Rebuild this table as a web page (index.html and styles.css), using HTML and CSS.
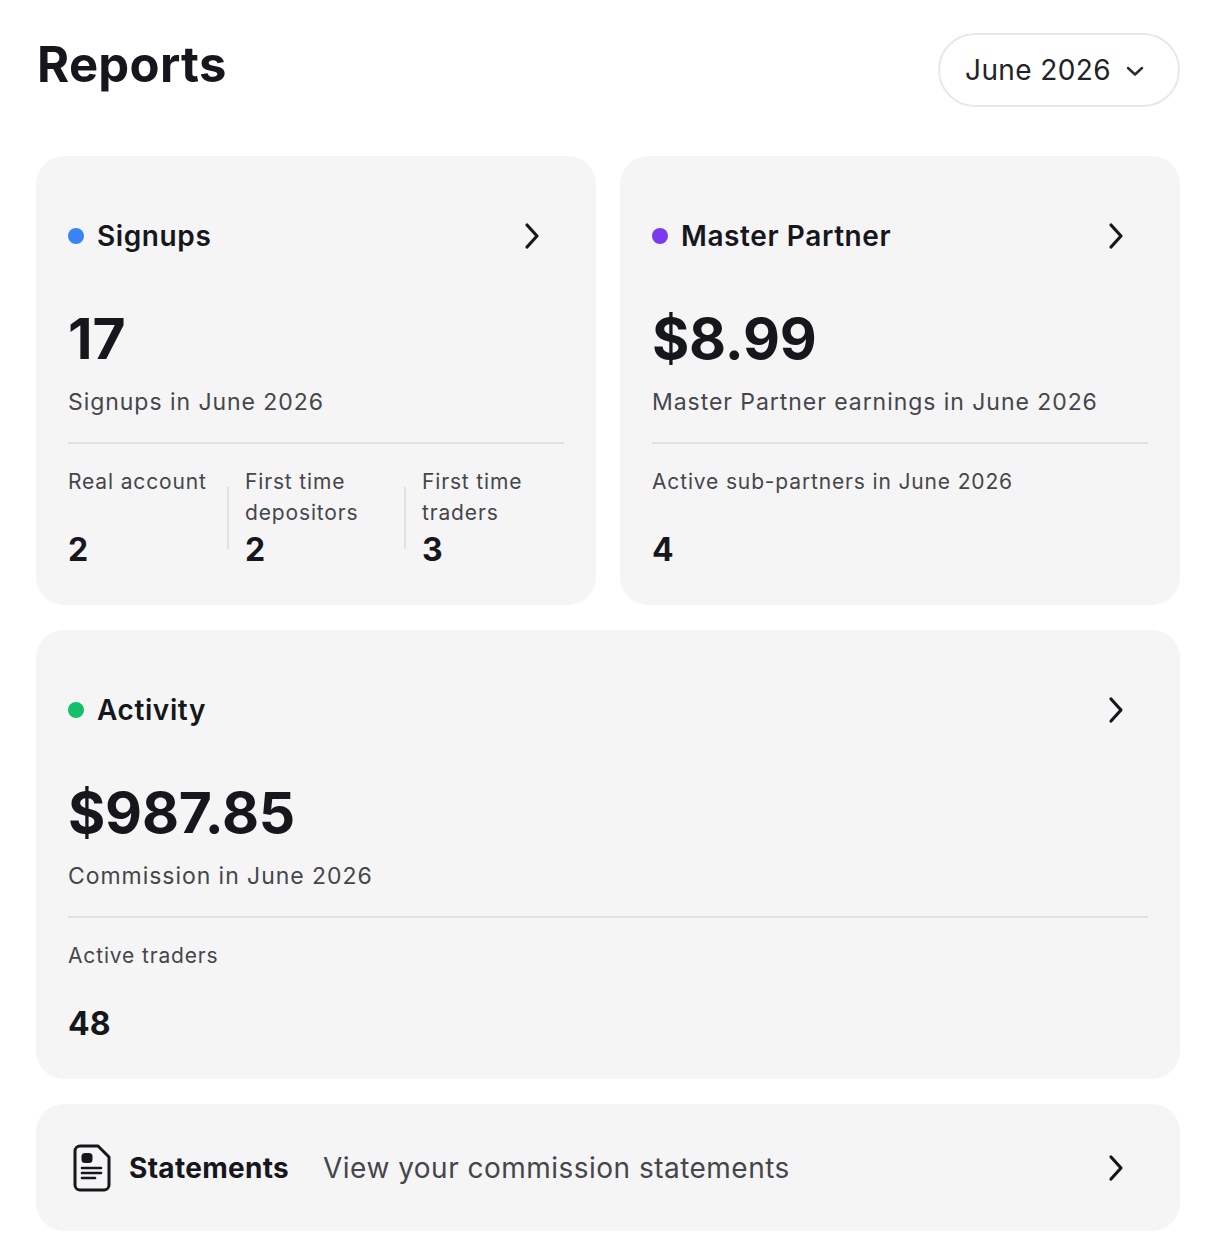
FILE: index.html
```html
<!DOCTYPE html>
<html lang="en">
<head>
<meta charset="utf-8">
<title>Reports</title>
<link rel="stylesheet" href="styles.css">
</head>
<body>
<main class="page">
  <header class="page-header">
    <h1 class="title">Reports</h1>
    <button class="month-select" type="button">
      <span class="month-text">June 2026</span>
      <svg class="chev-down" width="18" height="12" viewBox="0 0 18 12"><polyline points="2,3 9,9.5 16,3" fill="none" stroke="#2a2b30" stroke-width="2.4" stroke-linecap="round" stroke-linejoin="round"/></svg>
    </button>
  </header>

  <section class="grid">
    <article class="card">
      <div class="card-head">
        <span class="dot dot-blue"></span>
        <h2 class="card-title">Signups</h2>
        <svg class="chev" width="18" height="28" viewBox="0 0 18 28"><polyline points="4,3 14,14 4,25" fill="none" stroke="#16171d" stroke-width="3.2" stroke-linecap="round" stroke-linejoin="round"/></svg>
      </div>
      <div class="big">17</div>
      <div class="sub">Signups in June 2026</div>
      <hr class="divider">
      <div class="stats three">
        <div class="stat"><div class="label">Real account</div><div class="num">2</div></div>
        <span class="vline"></span>
        <div class="stat"><div class="label">First time depositors</div><div class="num">2</div></div>
        <span class="vline"></span>
        <div class="stat"><div class="label">First time traders</div><div class="num">3</div></div>
      </div>
    </article>

    <article class="card">
      <div class="card-head">
        <span class="dot dot-purple"></span>
        <h2 class="card-title">Master Partner</h2>
        <svg class="chev" width="18" height="28" viewBox="0 0 18 28"><polyline points="4,3 14,14 4,25" fill="none" stroke="#16171d" stroke-width="3.2" stroke-linecap="round" stroke-linejoin="round"/></svg>
      </div>
      <div class="big">$8.99</div>
      <div class="sub">Master Partner earnings in June 2026</div>
      <hr class="divider">
      <div class="stats">
        <div class="stat"><div class="label">Active sub-partners in June 2026</div><div class="num">4</div></div>
      </div>
    </article>

    <article class="card wide">
      <div class="card-head">
        <span class="dot dot-green"></span>
        <h2 class="card-title">Activity</h2>
        <svg class="chev" width="18" height="28" viewBox="0 0 18 28"><polyline points="4,3 14,14 4,25" fill="none" stroke="#16171d" stroke-width="3.2" stroke-linecap="round" stroke-linejoin="round"/></svg>
      </div>
      <div class="big">$987.85</div>
      <div class="sub">Commission in June 2026</div>
      <hr class="divider">
      <div class="stats">
        <div class="stat"><div class="label">Active traders</div><div class="num">48</div></div>
      </div>
    </article>

    <a class="card statements wide" href="#">
      <svg class="doc" width="38" height="48" viewBox="0 0 38 48">
        <path d="M7 2 H25 L36 13 V41 A5 5 0 0 1 31 46 H7 A5 5 0 0 1 2 41 V7 A5 5 0 0 1 7 2 Z" fill="none" stroke="#16171d" stroke-width="3" stroke-linejoin="round"/>
        <rect x="8.5" y="9" width="11" height="10" rx="3.5" fill="#16171d"/>
        <line x1="9" y1="24" x2="28" y2="24" stroke="#16171d" stroke-width="2.6" stroke-linecap="round"/>
        <line x1="9" y1="29" x2="28" y2="29" stroke="#16171d" stroke-width="2.6" stroke-linecap="round"/>
        <line x1="9" y1="34" x2="22" y2="34" stroke="#16171d" stroke-width="2.6" stroke-linecap="round"/>
      </svg>
      <span class="st-title">Statements</span>
      <span class="st-desc">View your commission statements</span>
      <svg class="chev" width="18" height="28" viewBox="0 0 18 28"><polyline points="4,3 14,14 4,25" fill="none" stroke="#16171d" stroke-width="3.2" stroke-linecap="round" stroke-linejoin="round"/></svg>
    </a>
  </section>
</main>
</body>
</html>
```

FILE: styles.css
```css
* { box-sizing: border-box; }

html, body {
  margin: 0;
  background: #ffffff;
  font-family: Inter, "Noto Sans", Arial, sans-serif;
  color: #16171d;
}

.page {
  padding: 33px 36px 24px 36px;
}

.page-header {
  display: flex;
  align-items: center;
  justify-content: space-between;
  height: 74px;
}

.title {
  margin: 0;
  font-size: 49px;
  font-weight: 700;
  letter-spacing: 0.3px;
  line-height: 1;
  margin-top: -12px;
  margin-left: 1px;
}

.month-select {
  display: flex;
  align-items: center;
  justify-content: space-between;
  height: 74px;
  width: 242px;
  padding: 0 34px 0 25px;
  border: 2px solid #e8e8e8;
  border-radius: 37px;
  background: #fff;
  font-family: inherit;
  font-size: 28px;
  color: #222328;
  letter-spacing: 0.4px;
  white-space: nowrap;
  cursor: pointer;
}

.chev-down { flex: none; margin-top: 2px; }

.grid {
  margin-top: 49px;
  display: grid;
  grid-template-columns: 1fr 1fr;
  gap: 25px 24px;
}

.card {
  background: #f5f5f5;
  border-radius: 28px;
  padding: 60px 32px 35px 32px;
  display: flex;
  flex-direction: column;
  min-height: 449px;
}

.wide { grid-column: 1 / -1; }

.card-head {
  display: flex;
  align-items: center;
  height: 40px;
}

.dot {
  width: 16px;
  height: 16px;
  border-radius: 50%;
  flex: none;
  margin-right: 13px;
}
.dot-blue { background: #3b82f6; }
.dot-purple { background: #7c3aed; }
.dot-green { background: #12c06a; }

.card-title {
  margin: 0;
  font-size: 28px;
  font-weight: 600;
  letter-spacing: 0.6px;
  flex: 1;
}

.chev { flex: none; margin-right: 23px; }

.big {
  margin-top: 47px;
  font-size: 57px;
  font-weight: 700;
  line-height: 72px;
  letter-spacing: -0.2px;
}

.sub {
  margin-top: 11px;
  font-size: 23px;
  line-height: 32px;
  color: #45464b;
  letter-spacing: 0.95px;
}

.divider {
  margin: 24px 0 0 0;
  border: none;
  border-top: 2px solid #e1e1e3;
  height: 0;
}

.stats {
  margin-top: 22px;
  display: grid;
  grid-template-columns: 1fr;
}

.stats.three {
  grid-template-columns: 142px 1px 142px 1px 142px;
  column-gap: 17px;
}

.vline {
  width: 2px;
  height: 62px;
  background: #e1e1e3;
  align-self: center;
}

.stat {
  display: flex;
  flex-direction: column;
  justify-content: space-between;
}

.label {
  font-size: 21px;
  line-height: 31px;
  min-height: 62px;
  color: #45464b;
  letter-spacing: 0.85px;
}

.stats.three .label { min-height: 0; }

.num {
  margin-top: 2px;
  font-size: 32px;
  line-height: 40px;
  font-weight: 700;
}

.statements {
  min-height: 127px;
  padding: 0 32px 0 37px;
  flex-direction: row;
  align-items: center;
  text-decoration: none;
  color: #16171d;
}

.doc { flex: none; margin-right: 18px; }

.st-title {
  font-size: 28px;
  font-weight: 700;
  letter-spacing: 0.3px;
  margin-right: 34px;
}

.st-desc {
  font-size: 28px;
  color: #45464b;
  letter-spacing: 0.48px;
  flex: 1;
}
```
